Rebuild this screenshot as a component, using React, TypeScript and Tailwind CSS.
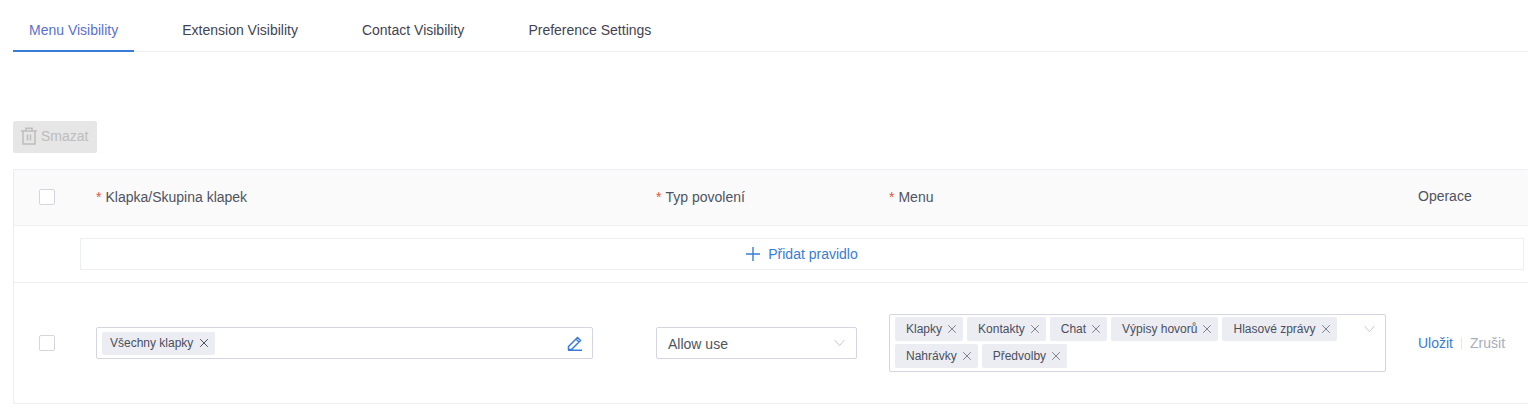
import React from "react";

const X = ({ className = "" }: { className?: string }) => (
  <svg viewBox="0 0 10 10" className={`w-[10px] h-[10px] ${className}`} fill="none" stroke="currentColor" strokeWidth="1">
    <path d="M1.2 1.2 8.8 8.8M8.8 1.2 1.2 8.8" />
  </svg>
);

const Chevron = () => (
  <svg viewBox="0 0 12 8" className="w-[11px] h-[8px] text-[#bfc1cc]" fill="none" stroke="currentColor" strokeWidth="1">
    <path d="M.7.8 6 6.8 11.3.8" />
  </svg>
);

const Tag = ({ label }: { label: string }) => (
  <span className="h-6 flex items-center rounded-[2px] bg-[#ebedf2] pl-[11px] pr-[6px] gap-[5px] text-xs text-[#4a4f60] whitespace-nowrap">
    {label}
    <X className="text-[#80838f]" />
  </span>
);

const Check = () => <span className="block w-4 h-4 rounded-[2px] border border-[#d4d5e0] bg-white" />;

const Req = ({ label }: { label: string }) => (
  <span className="text-[14px] text-[#4f5361]">
    <span className="text-[#e0553a] mr-1">*</span>
    {label}
  </span>
);

export default function App() {
  return (
    <div className="w-[1528px] h-[413px] overflow-hidden bg-white pl-[13px] font-['Liberation_Sans',Arial,sans-serif]">
      <div className="h-[52px] flex items-end border-b border-[#eceef2] text-[14px] text-[#3f4353]">
        <div className="h-[52px] -mb-px px-4 pt-[10px] flex items-center border-b-2 border-[#3a7bd5] text-[#5a6fd0]">Menu Visibility</div>
        <div className="h-[51px] ml-8 px-4 pt-[10px] flex items-center">Extension Visibility</div>
        <div className="h-[51px] ml-8 px-4 pt-[10px] flex items-center">Contact Visibility</div>
        <div className="h-[51px] ml-8 px-4 pt-[10px] flex items-center">Preference Settings</div>
      </div>

      <div className="mt-[69px] w-[84px] h-8 rounded-[2px] bg-[#e6e6e6] flex items-center pl-[7px] pb-[2px] gap-[3px] text-[14px] text-[#bdbdbd]">
        <svg viewBox="0 0 18 18" className="w-[18px] h-[18px]" fill="none" stroke="currentColor" strokeWidth="1.5">
          <path d="M1 4h16M6 4V1.2h6V4M3 4v13h12V4M7.5 7.5v6M10.5 7.5v6" />
        </svg>
        Smazat
      </div>

      <div className="mt-4 w-[1515px] h-[235px] border border-r-0 border-[#eceef2] rounded-[2px]">
        <div className="h-[56px] pb-[2px] grid grid-cols-[66px_560px_233px_529px_1fr] items-center bg-[#fafafa] border-b border-[#eceef2]">
          <div className="pl-[25px]"><Check /></div>
          <div className="pl-4"><Req label="Klapka/Skupina klapek" /></div>
          <div className="pl-4"><Req label="Typ povolení" /></div>
          <div className="pl-4"><Req label="Menu" /></div>
          <div className="pl-4 text-[14px] text-[#4f5361]">Operace</div>
        </div>

        <div className="h-[57px] border-b border-[#eceef2] pt-3 pl-[66px] pr-[4px]">
          <div className="h-8 border border-[#eceef2] flex items-center justify-center gap-2 text-[14px] text-[#3a7bd5]">
            <svg viewBox="0 0 14 14" className="w-[14px] h-[14px]" fill="none" stroke="currentColor" strokeWidth="1.4">
              <path d="M7 0v14M0 7h14" />
            </svg>
            Přidat pravidlo
          </div>
        </div>

        <div className="h-[120px] grid grid-cols-[66px_560px_233px_529px_1fr] items-center">
          <div className="pl-[25px]"><Check /></div>
          <div className="pl-4">
            <div className="w-[497px] h-8 rounded-[2px] border border-[#d4d5e0] flex items-center pl-[5px] pr-[9px] justify-between">
              <span className="h-[23px] flex items-center rounded-[2px] bg-[#ebedf2] pl-2 pr-[6px] gap-[6px] text-xs text-[#4a4f60] whitespace-nowrap">
                Všechny klapky
                <X className="text-[#4a4f60]" />
              </span>
              <svg viewBox="0 0 16 16" className="w-4 h-4 text-[#3a7bd5]" fill="none" stroke="currentColor" strokeWidth="1.5">
                <path d="M1.5 11.5 10.5 2.5 13.5 5.5 4.5 14.5H1.5ZM9 4l3 3M1 15.3h14" />
              </svg>
            </div>
          </div>
          <div className="pl-4">
            <div className="w-[201px] h-8 rounded-[2px] border border-[#d4d5e0] flex items-center justify-between pl-[11px] pr-[11px] text-[14px] text-[#4f5361]">
              <span className="mt-[2px]">Allow use</span>
              <Chevron />
            </div>
          </div>
          <div className="pl-4">
            <div className="w-[497px] h-[58px] rounded-[2px] border border-[#d4d5e0] flex items-start justify-between pl-[5px] pr-[10px] pt-[2px]">
              <div className="w-[446px] flex flex-wrap gap-x-1 gap-y-[3px]">
                <Tag label="Klapky" />
                <Tag label="Kontakty" />
                <Tag label="Chat" />
                <Tag label="Výpisy hovorů" />
                <Tag label="Hlasové zprávy" />
                <Tag label="Nahrávky" />
                <Tag label="Předvolby" />
              </div>
              <span className="mt-[8px]"><Chevron /></span>
            </div>
          </div>
          <div className="pl-4 flex items-center text-[14px] text-[#3a7bd5]">
            Uložit
            <span className="mx-2 w-px h-3 bg-[#e6e7ec]" />
            <span className="text-[#a9acbb]">Zrušit</span>
          </div>
        </div>
      </div>
    </div>
  );
}
